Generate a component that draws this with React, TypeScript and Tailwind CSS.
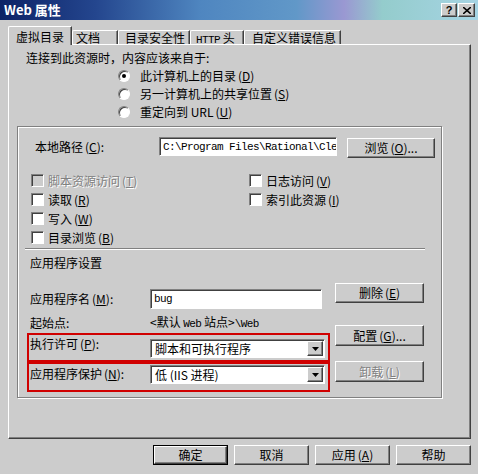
import React from "react";

const raised =
  "border border-t-white border-l-white border-r-[#404040] border-b-[#404040] shadow-[inset_-1px_-1px_0_#808080]";
const sunken =
  "border border-t-[#808080] border-l-[#808080] border-r-white border-b-white shadow-[inset_1px_1px_0_#404040]";
const etchedText = "text-[#808080] [text-shadow:1px_1px_0_#ffffff]";
const mono = "[font-family:'Liberation_Mono',monospace] text-[11px] tracking-[-0.6px]";

const K = ({ k }: { k: string }) => (
  <span className="ml-[2px]">
    (<span className="underline underline-offset-[1px]">{k}</span>)
  </span>
);

const Button = ({
  children,
  size,
  disabled,
  primary,
}: {
  children: React.ReactNode;
  size: string;
  disabled?: boolean;
  primary?: boolean;
}) => (
  <div className={`${size} ${primary ? "border border-black" : ""} flex`}>
    <div
      className={`${raised} flex-1 flex items-center justify-center bg-[#cccccc] ${
        disabled ? etchedText : ""
      }`}
    >
      {children}
    </div>
  </div>
);

const Checkbox = ({ label, k, disabled }: { label: string; k: string; disabled?: boolean }) => (
  <div className="h-[19px] flex items-center gap-[4px]">
    <div className={`${sunken} w-[13px] h-[13px] ${disabled ? "bg-[#cccccc]" : "bg-white"}`} />
    <span className={disabled ? etchedText : ""}>
      {label}
      <K k={k} />
    </span>
  </div>
);

const Radio = ({ label, k, checked }: { label: React.ReactNode; k: string; checked?: boolean }) => (
  <div className="h-[18px] flex items-center gap-[10px]">
    <div className="w-[12px] h-[12px] rounded-full bg-white border border-t-[#808080] border-l-[#808080] border-r-white border-b-white shadow-[inset_1px_1px_0_#404040] flex items-center justify-center">
      {checked && <div className="w-[4px] h-[4px] rounded-full bg-black" />}
    </div>
    <span>
      {label}
      <K k={k} />
    </span>
  </div>
);

const Select = ({ value }: { value: string }) => (
  <div className={`${sunken} w-[175px] h-[19px] bg-white flex items-center pl-[4px]`}>
    <span>{value}</span>
    <div className={`${raised} ml-auto mr-[1px] w-[16px] h-[15px] bg-[#cccccc] flex items-center justify-center`}>
      <svg width="7" height="4" viewBox="0 0 7 4">
        <polygon points="0,0 7,0 3.5,4" fill="#000" />
      </svg>
    </div>
  </div>
);

const tabs: { label: React.ReactNode; key: string; cls: string }[] = [
  { key: "doc", label: "文档", cls: "w-[46px] pl-[3px]" },
  { key: "sec", label: "目录安全性", cls: "w-[72px] pl-[6px]" },
  {
    key: "http",
    label: (
      <>
        <span className={mono}>HTTP</span> 头
      </>
    ),
    cls: "w-[54px] pl-[5px]",
  },
  { key: "err", label: "自定义错误信息", cls: "w-[97px] pl-[7px]" },
];

export default function App() {
  return (
    <div className="w-[478px] h-[474px] bg-[#cccccc] text-black text-[12px] leading-[14px] [font-family:'Noto_Sans_CJK_SC','Noto_Sans',sans-serif] overflow-hidden flex flex-col">
      {/* title bar */}
      <div className="h-[20px] flex items-center pl-[4px] pr-[3px] bg-[linear-gradient(90deg,#0c2266_0%,#24468e_20%,#4f86c0_42%,#6198c8_62%,#9a98d2_72%,#94cccc_80%,#a6d4e4_100%)]">
        <span className="text-white font-bold text-[13px]">Web 属性</span>
        <div className="ml-auto flex gap-[1px]">
          <div className={`${raised} w-[16px] h-[14px] bg-[#cccccc] flex items-center justify-center text-[11px] font-bold leading-none [font-family:'Liberation_Sans',sans-serif]`}>
            ?
          </div>
          <div className={`${raised} w-[17px] h-[14px] bg-[#cccccc] flex items-center justify-center`}>
            <svg width="8" height="7" viewBox="0 0 8 7">
              <path d="M0 0 L8 7 M8 0 L0 7" stroke="#000" strokeWidth="1.6" />
            </svg>
          </div>
        </div>
      </div>

      {/* tabs */}
      <div className="mt-[6px] pl-[8px] h-[19px] -mb-[1px] flex items-end">
        <div className="relative z-10 w-[64px] h-[19px] bg-[#cccccc] border-t border-l border-t-white border-l-white border-r border-r-[#404040] shadow-[inset_-1px_0_0_#808080] rounded-tl-[2px] pl-[7px] pt-[3px]">
          虚拟目录
        </div>
        {tabs.map((t) => (
          <div
            key={t.key}
            className={`${t.cls} h-[14px] mb-[1px] border-t border-l border-t-white border-l-white border-r border-r-[#404040] shadow-[inset_-1px_0_0_#808080] rounded-tl-[2px] pt-[1px] leading-[12px] whitespace-nowrap`}
          >
            {t.label}
          </div>
        ))}
      </div>

      {/* tab panel */}
      <div className="ml-[8px] w-[463px] h-[395px] border border-t-white border-l-white border-r-[#404040] border-b-[#404040] shadow-[inset_-1px_-1px_0_#808080] flex flex-col">
        <div className="mt-[6px] pl-[17px] h-[14px]">连接到此资源时，内容应该来自于:</div>
        <div className="mt-[2px] pl-[109px] flex flex-col">
          <Radio label="此计算机上的目录" k="D" checked />
          <Radio label="另一计算机上的共享位置" k="S" />
          <Radio label="重定向到 URL" k="U" />
        </div>

        {/* group */}
        <div className="mt-[5px] ml-[8px] w-[425px] h-[272px] border border-[#808080] shadow-[inset_1px_1px_0_#ffffff,1px_1px_0_#ffffff] flex flex-col">
          <div className="mt-[10px] h-[21px] flex items-start">
            <div className="w-[141px] pl-[17px] leading-[19px]">
              本地路径<K k="C" />:
            </div>
            <div className={`${sunken} ${mono} w-[178px] h-[19px] bg-white flex items-center pl-[3px] overflow-hidden whitespace-nowrap`}>
              C:\Program Files\Rational\Cle
            </div>
            <div className="ml-[10px] mt-[1px]">
              <Button size="w-[88px] h-[20px]">
                浏览<K k="O" />...
              </Button>
            </div>
          </div>

          <div className="mt-[13px] flex">
            <div className="w-[231px] pl-[13px] flex flex-col">
              <Checkbox label="脚本资源访问" k="T" disabled />
              <Checkbox label="读取" k="R" />
              <Checkbox label="写入" k="W" />
              <Checkbox label="目录浏览" k="B" />
            </div>
            <div className="flex flex-col">
              <Checkbox label="日志访问" k="V" />
              <Checkbox label="索引此资源" k="I" />
            </div>
          </div>

          <div className="mt-[1px] ml-[7px] w-[400px] h-[2px] border-t border-t-[#808080] border-b border-b-white" />
          <div className="mt-[6px] pl-[12px] h-[14px]">应用程序设置</div>

          <div className="mt-[13px] flex">
            <div className="ml-[9px] w-[303px] flex flex-col">
              <div className="mt-[6px] h-[20px] flex items-center">
                <div className="w-[123px] pl-[3px]">
                  应用程序名<K k="M" />:
                </div>
                <div className={`${sunken} ${mono} w-[172px] h-[20px] bg-white flex items-center pl-[3px]`}>
                  bug
                </div>
              </div>
              <div className="mt-[7px] h-[14px] flex items-center">
                <div className="w-[123px] pl-[3px]">起始点:</div>
                <div>
                  &lt;默认 <span className={mono}>Web</span> 站点&gt;<span className={mono}>\Web</span>
                </div>
              </div>
              <div className="mt-[3px] h-[29px] border-2 border-[#d00000] flex items-start">
                <div className="w-[121px] pl-[1px] mt-[2px]">
                  执行许可<K k="P" />:
                </div>
                <div className="mt-[4px]">
                  <Select value="脚本和可执行程序" />
                </div>
              </div>
              <div className="h-[30px] border-2 border-[#d00000] flex items-start pt-[1px]">
                <div className="w-[121px] pl-[1px] mt-[2px]">
                  应用程序保护<K k="N" />:
                </div>
                <Select value="低 (IIS 进程)" />
              </div>
            </div>
            <div className="ml-[5px] flex flex-col">
              <Button size="w-[89px] h-[20px]">
                删除<K k="E" />
              </Button>
              <div className="mt-[22px]">
                <Button size="w-[89px] h-[21px]">
                  配置<K k="G" />...
                </Button>
              </div>
              <div className="mt-[15px]">
                <Button size="w-[89px] h-[21px]" disabled>
                  卸载<K k="L" />
                </Button>
              </div>
            </div>
          </div>
        </div>
      </div>

      {/* dialog buttons */}
      <div className="mt-[6px] pr-[7px] flex justify-end gap-[6px]">
        <Button size="w-[75px] h-[20px]" primary>
          确定
        </Button>
        <Button size="w-[75px] h-[20px]">取消</Button>
        <Button size="w-[75px] h-[20px]">
          应用<K k="A" />
        </Button>
        <Button size="w-[75px] h-[20px]">帮助</Button>
      </div>
    </div>
  );
}
